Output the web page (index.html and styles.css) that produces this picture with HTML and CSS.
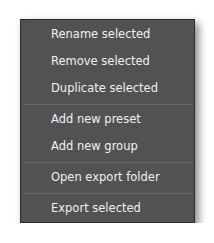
FILE: index.html
```html
<!DOCTYPE html>
<html lang="en">
  <head>
    <meta charset="UTF-8" />
    <title>Preset menu</title>
    <link rel="stylesheet" href="styles.css">
  </head>
  <body>
    <ul class="menu">
      <li class="menu-item">Rename selected</li>
      <li class="menu-item">Remove selected</li>
      <li class="menu-item">Duplicate selected</li>
      <li class="separator"></li>
      <li class="menu-item">Add new preset</li>
      <li class="menu-item">Add new group</li>
      <li class="separator"></li>
      <li class="menu-item">Open export folder</li>
      <li class="separator"></li>
      <li class="menu-item">Export selected</li>
    </ul>
  </body>
</html>
```

FILE: styles.css
```css
* {
  box-sizing: border-box;
  margin: 0;
  padding: 0;
}

body {
  background: #ffffff;
  padding: 19px 0 0 20px;
  font-family: "DejaVu Sans", Verdana, sans-serif;
}

.menu {
  list-style: none;
  width: 175px;
  padding: 1px 1px 0 0;
  background: #525252;
  border: 1px solid #2c2c2c;
  box-shadow: 4px 4px 8px rgba(0, 0, 0, 0.45);
}

.menu-item {
  height: 27px;
  line-height: 27px;
  padding-left: 30px;
  font-size: 11.5px;
  color: #f0f0f0;
  white-space: nowrap;
}

.separator {
  height: 4px;
  padding: 0;
  margin-left: 3px;
  display: flex;
  align-items: center;
}

.separator::after {
  content: "";
  flex: 1;
  height: 1px;
  background: #6a6a6a;
}
```
